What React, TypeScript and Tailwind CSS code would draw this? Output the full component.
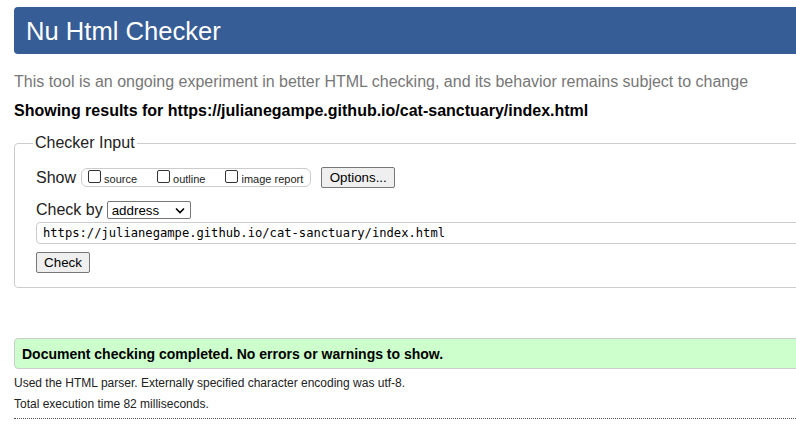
import React from "react";

const sans = { fontFamily: '"Liberation Sans", Arial, sans-serif' };

function Box({ label }: { label: string }) {
  return (
    <span className="flex items-start">
      <span className="mt-[1px] h-[13px] w-[13px] rounded-[2px] border border-[#333333] bg-white" />
      <span className="ml-[3px] mt-[4px] text-[11px] leading-[13px] text-[#222222]">{label}</span>
    </span>
  );
}

export default function App() {
  return (
    <div className="h-[448px] w-[796px] overflow-hidden bg-white font-['Liberation_Sans',Arial,sans-serif]" style={sans}>
      <div className="w-[900px] pl-[14px] pt-[7px]">
        <header className="flex h-[47px] items-center rounded-[4px] bg-[#365d95] pl-[12px]">
          <h1 className="text-[25.6px] leading-[30px] text-white">Nu Html Checker</h1>
        </header>

        <p className="mt-[19px] text-[16px] leading-[18px] text-[#777777]">
          This tool is an ongoing experiment in better HTML checking, and its behavior remains subject to change
        </p>
        <p className="mt-[11px] text-[16px] font-bold leading-[18px] text-black">
          Showing results for https://julianegampe.github.io/cat-sanctuary/index.html
        </p>

        <fieldset className="mt-[14px] rounded-[4px] border border-[#cccccc] pb-[14px] pl-[18px]">
          <legend className="px-[2px] text-[16px] leading-[18px] text-[#222222]">Checker Input</legend>
          <div className="ml-[3px] mt-[15px]">
            <div className="flex h-[21px] items-center">
              <span className="text-[16px] leading-[18px] text-[#222222]">Show</span>
              <div className="ml-[5px] flex h-[19px] items-start gap-[20px] rounded-[6px] border border-[#cccccc] pl-[6px] pr-[7px]">
                <Box label="source" />
                <Box label="outline" />
                <Box label="image report" />
              </div>
              <button className="ml-[10px] h-[21px] w-[74px] rounded-[2px] border border-[#767676] bg-[#efefef] text-[13.33px] leading-[15px] text-black">
                Options...
              </button>
            </div>

            <div className="mt-[13px] flex h-[18px] items-center">
              <span className="text-[16px] leading-[18px] text-[#222222]">Check by</span>
              <div className="ml-[4px] flex h-[18px] w-[84px] items-center justify-between rounded-[2px] border border-[#767676] bg-white pl-[4px] pr-[5px]">
                <span className="text-[13.33px] leading-[15px] text-black">address</span>
                <svg width="10" height="7" viewBox="0 0 10 7">
                  <path d="M1 1.5 L5 5.5 L9 1.5" fill="none" stroke="#000" strokeWidth="1.6" />
                </svg>
              </div>
            </div>

            <div className="mt-[3px] flex h-[22px] items-center rounded-[4px] border border-[#cccccc] pl-[6px]">
              <span className="font-['DejaVu_Sans_Mono',monospace] text-[12.15px] leading-[14px] text-black">
                https://julianegampe.github.io/cat-sanctuary/index.html
              </span>
            </div>

            <button className="mt-[8px] block h-[21px] w-[54px] rounded-[2px] border border-[#767676] bg-[#efefef] text-[13.33px] leading-[15px] text-black">
              Check
            </button>
          </div>
        </fieldset>

        <div className="mt-[50px] flex h-[31px] items-center rounded-[4px] border border-[#cccccc] bg-[#ccffcc] pl-[7px]">
          <span className="text-[14px] font-bold leading-[16px] text-black">
            Document checking completed. No errors or warnings to show.
          </span>
        </div>
        <p className="mt-[7px] text-[12px] leading-[14px] text-[#222222]">
          Used the HTML parser. Externally specified character encoding was utf-8.
        </p>
        <p className="mt-[7px] text-[12px] leading-[14px] text-[#222222]">Total execution time 82 milliseconds.</p>
        <div className="mt-[7px] border-t border-dotted border-[#555555]" />
      </div>
    </div>
  );
}
